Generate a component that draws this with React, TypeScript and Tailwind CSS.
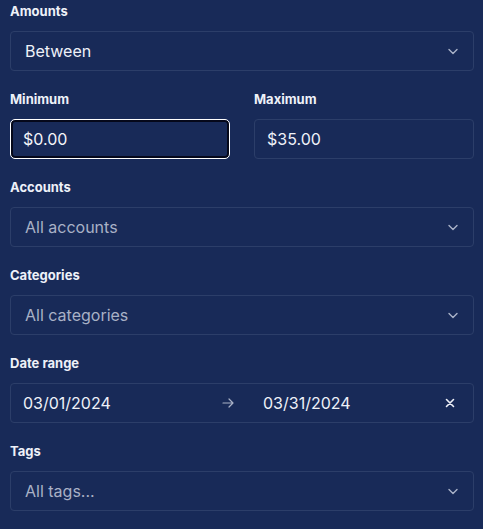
import React from "react";

const Chevron = () => (
  <svg width="12" height="12" viewBox="0 0 12 12" fill="none" className="text-[#aab3c9]">
    <path d="M2 4.5 6 8.5l4-4" stroke="currentColor" strokeWidth="1.4" strokeLinecap="round" strokeLinejoin="round" />
  </svg>
);

const Label = ({ children }: { children: React.ReactNode }) => (
  <div className="h-5 leading-5 text-[13px] font-bold text-[#eef1f8] mb-[10px]">{children}</div>
);

const Select = ({ text, placeholder }: { text: string; placeholder?: boolean }) => (
  <div className="h-10 rounded-[4px] border border-[#2c3e69] flex items-center pl-[14px] pr-[14px] justify-between">
    <span className={`text-[16px] ${placeholder ? "text-[#a9b1c6]" : "text-[#eef1f8]"}`}>{text}</span>
    <Chevron />
  </div>
);

export default function App() {
  return (
    <div
      className="w-[483px] h-[529px] bg-[#182a58] pl-[10px] pr-[9px] pt-[1px]"
      style={{ fontFamily: "Inter, 'Liberation Sans', sans-serif" }}
    >
      <Label>Amounts</Label>
      <Select text="Between" />
      <div className="h-[18px]" />
      <div className="flex gap-[24px]">
        <div className="flex-1">
          <Label>Minimum</Label>
          <div className="h-10 rounded-[5px] border border-white shadow-[inset_0_0_0_2px_#05081a] flex items-center pl-[12px] text-[16px] text-[#f3f5fa]">
            $0.00
          </div>
        </div>
        <div className="flex-1">
          <Label>Maximum</Label>
          <div className="h-10 rounded-[4px] border border-[#2c3e69] flex items-center pl-[12px] text-[16px] text-[#eef1f8]">
            $35.00
          </div>
        </div>
      </div>
      <div className="h-[18px]" />
      <Label>Accounts</Label>
      <Select text="All accounts" placeholder />
      <div className="h-[18px]" />
      <Label>Categories</Label>
      <Select text="All categories" placeholder />
      <div className="h-[18px]" />
      <Label>Date range</Label>
      <div className="h-10 rounded-[4px] border border-[#2c3e69] flex items-center pl-[12px] pr-[17px] text-[16px] text-[#eef1f8]">
        <span className="w-[198px]">03/01/2024</span>
        <svg width="14" height="14" viewBox="0 0 14 14" fill="none" className="text-[#a9b1c6]">
          <path d="M2 7h10M8 3l4 4-4 4" stroke="currentColor" strokeWidth="1.2" strokeLinecap="round" strokeLinejoin="round" />
        </svg>
        <span className="ml-[28px] flex-1">03/31/2024</span>
        <svg width="12" height="12" viewBox="0 0 12 12" fill="none" className="text-[#eef1f8]">
          <path d="M2.5 2.5l7 7M9.5 2.5l-7 7" stroke="currentColor" strokeWidth="1.6" strokeLinecap="round" />
        </svg>
      </div>
      <div className="h-[18px]" />
      <Label>Tags</Label>
      <Select text="All tags..." placeholder />
    </div>
  );
}
